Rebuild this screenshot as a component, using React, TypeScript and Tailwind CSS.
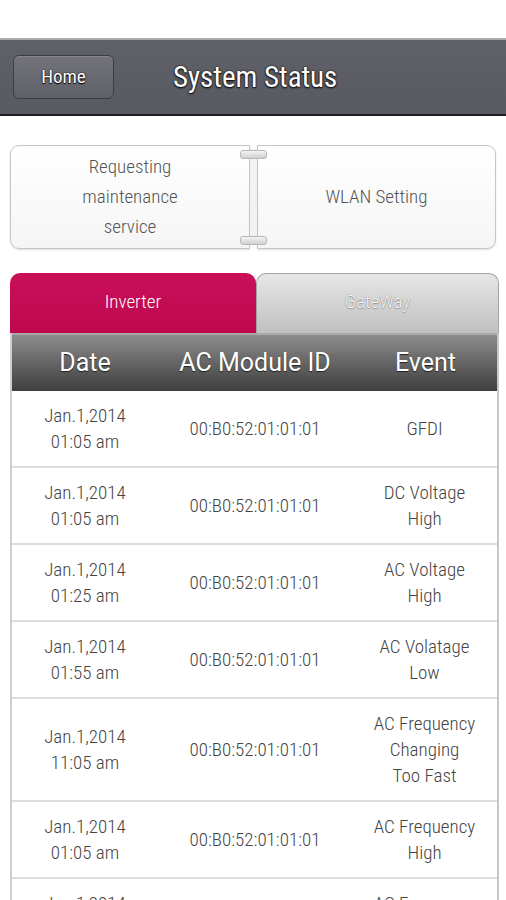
import React from 'react';

interface LogRow {
  date: string;
  time: string;
  moduleId: string;
  event: string[];
}

const rows: LogRow[] = [
  { date: 'Jan.1,2014', time: '01:05 am', moduleId: '00:B0:52:01:01:01', event: ['GFDI'] },
  { date: 'Jan.1,2014', time: '01:05 am', moduleId: '00:B0:52:01:01:01', event: ['DC Voltage', 'High'] },
  { date: 'Jan.1,2014', time: '01:25 am', moduleId: '00:B0:52:01:01:01', event: ['AC Voltage', 'High'] },
  { date: 'Jan.1,2014', time: '01:55 am', moduleId: '00:B0:52:01:01:01', event: ['AC Volatage', 'Low'] },
  { date: 'Jan.1,2014', time: '11:05 am', moduleId: '00:B0:52:01:01:01', event: ['AC Frequency', 'Changing', 'Too Fast'] },
  { date: 'Jan.1,2014', time: '01:05 am', moduleId: '00:B0:52:01:01:01', event: ['AC Frequency', 'High'] },
  { date: 'Jan.1,2014', time: '01:35 am', moduleId: '00:B0:52:01:01:01', event: ['AC Frequency', 'Low'] }
];

const narrow = "font-['Roboto_Condensed','Liberation_Sans_Narrow',Roboto,sans-serif]";

const Connector: React.FC = () => (
  <div className="relative w-[7px] shrink-0 self-stretch">
    <div className="absolute left-[-1px] top-[4px] bottom-[4px] w-[9px] border-x border-[#c4c4c4] bg-[#f2f2f2]" />
    <div className="absolute left-[-10px] top-[5px] h-[9px] w-[27px] rounded-[3px] border border-[#b8b8b8] bg-gradient-to-b from-[#f4f4f4] to-[#d0d0d0]" />
    <div className="absolute left-[-10px] bottom-[4px] h-[9px] w-[27px] rounded-[3px] border border-[#b8b8b8] bg-gradient-to-b from-[#f4f4f4] to-[#d0d0d0]" />
  </div>
);

const App: React.FC = () => {
  return (
    <div className={`w-[506px] h-[900px] overflow-hidden bg-white font-light ${narrow}`}>
      <div className="h-[38px]" />

      {/* top bar */}
      <div className="h-[78px] border-t-2 border-[#a9a9ae] border-b-2 border-b-[#1e1e22] bg-gradient-to-b from-[#606069] to-[#595961] flex items-center px-[13px]">
        <button className="w-[101px] h-[44px] rounded-[6px] border border-[#3c3c44] bg-gradient-to-b from-[#73737a] to-[#606068] text-white text-[19px] font-normal [text-shadow:0_0_2px_#000,0_1px_1px_#000] shadow-[inset_0_1px_0_#86868c]">
          Home
        </button>
        <h1 className="ml-[59px] text-white text-[29px] font-normal leading-none [text-shadow:0_0_2px_#000,0_1px_2px_#000]">
          System Status
        </h1>
      </div>

      {/* actions */}
      <div className="mt-[29px] mx-[10px] flex h-[104px]">
        <button className="w-[240px] rounded-l-[9px] border border-[#c6c6c6] bg-gradient-to-b from-white to-[#f5f5f5] text-[#555555] text-[19px] leading-[30px] shadow-[0_1px_2px_#ddd]">
          Requesting<br />maintenance<br />service
        </button>
        <Connector />
        <button className="flex-1 rounded-r-[9px] border border-[#c6c6c6] bg-gradient-to-b from-white to-[#f5f5f5] text-[#555555] text-[19px] shadow-[0_1px_2px_#ddd]">
          WLAN Setting
        </button>
      </div>

      {/* tabs */}
      <div className="mt-[24px] ml-[10px] mr-[7px] flex h-[60px]">
        <div className="w-[246px] rounded-t-[10px] bg-gradient-to-b from-[#c80f58] to-[#c0084f] flex items-center justify-center text-white text-[19px] pb-[2px]">
          Inverter
        </div>
        <div className="flex-1 rounded-t-[10px] border border-b-0 border-[#a3a3a3] bg-gradient-to-b from-[#e6e6e6] to-[#c0c0c0] flex items-center justify-center text-[#f8f8f8] text-[19px] pb-[2px] [text-shadow:0_0_1px_#777,0_1px_1px_#999]">
          GateWay
        </div>
      </div>

      {/* table */}
      <div className="ml-[10px] mr-[7px] border-x-2 border-l-[#cfcfcf] border-r-[#c8c8c8]">
        <div className="grid grid-cols-[146px_194px_1fr] h-[58px] items-center border-t-2 border-[#a8a8a8] bg-gradient-to-b from-[#8d8d8d] to-[#3f3f3f] text-white text-[25px] font-normal font-['Roboto',sans-serif] [text-shadow:0_1px_1px_#222]">
          <div className="text-center">Date</div>
          <div className="text-center">AC Module ID</div>
          <div className="text-center pl-[2px]">Event</div>
        </div>
        {rows.map((row, i) => (
          <div
            key={i}
            className={`grid grid-cols-[146px_194px_1fr] items-center border-b-2 border-[#dcdcdc] text-[#444444] text-[19px] leading-[26px] ${row.event.length > 2 ? 'h-[103px]' : 'h-[77px]'}`}
          >
            <div className="text-center">
              {row.date}
              <br />
              {row.time}
            </div>
            <div className="text-center">{row.moduleId}</div>
            <div className="text-center">
              {row.event.map((line, j) => (
                <div key={j}>{line}</div>
              ))}
            </div>
          </div>
        ))}
      </div>
    </div>
  );
};

export default App;
